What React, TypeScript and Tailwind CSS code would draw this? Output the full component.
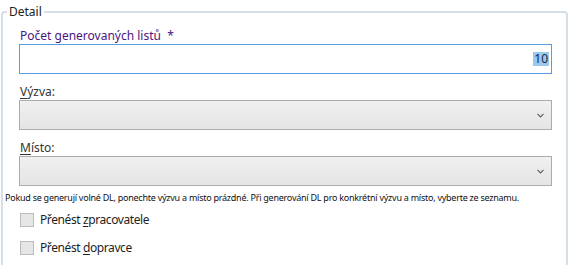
import React from "react";

const font = { fontFamily: '"Noto Sans", "Open Sans", sans-serif' };

function Chevron() {
  return (
    <svg width="7" height="5" viewBox="0 0 7 5" className="block">
      <polyline points="0.5,0.8 3.5,3.8 6.5,0.8" fill="none" stroke="#606060" strokeWidth="1.2" />
    </svg>
  );
}

function Combo() {
  return (
    <div className="h-[30px] border border-[#acacac] bg-gradient-to-b from-[#f0f0f0] to-[#e5e5e5] flex items-center justify-end pr-[7px]">
      <Chevron />
    </div>
  );
}

function Check({ pre, ul, post }: { pre: string; ul: string; post: string }) {
  return (
    <div className="flex items-center gap-[6px] h-[14px]">
      <div className="w-[14px] h-[14px] border border-[#bcbcbc] bg-[#e6e6e6]" />
      <span className="text-[12px] leading-[16px] tracking-[-0.4px] text-[#1e1e1e]">
        {pre}
        <span className="underline underline-offset-2">{ul}</span>
        {post}
      </span>
    </div>
  );
}

export default function App() {
  return (
    <div className="w-[571px] h-[265px] bg-white overflow-hidden pt-[4px]" style={font}>
      <fieldset className="ml-[1px] w-[567px] min-w-0 h-[290px] border-2 border-[#d5dfe5] rounded-[4px] pl-[16px] pr-[14px]">
        <legend className="ml-[-12px] px-[2px] text-[12px] leading-[16px] text-[#222]">Detail</legend>
        <div className="pt-[8px] flex flex-col min-w-0">
          <div className="text-[12px] leading-[16px] text-[#4b1680] pl-[1px]">Počet generovaných listů&nbsp; *</div>
          <div className="h-[30px] border border-[#569de5] bg-white flex items-center justify-end pr-[2px]">
            <span className="bg-[#99c9ef] text-[12px] leading-[14px] text-[#1a2a3a] px-[1px]">10</span>
          </div>
          <div className="mt-[10px] text-[12px] leading-[16px] text-[#333] pl-[1px]">
            <span className="underline underline-offset-2">V</span>ýzva:
          </div>
          <Combo />
          <div className="mt-[10px] text-[12px] leading-[16px] text-[#333] pl-[1px]">
            <span className="underline underline-offset-2">M</span>ísto:
          </div>
          <Combo />
          <div className="ml-[-14px] mt-[5px] text-[9px] leading-[14px] tracking-[-0.25px] text-[#111] whitespace-nowrap">
            Pokud se generují volné DL, ponechte výzvu a místo prázdné. Při generování DL pro konkrétní výzvu a místo, vyberte ze seznamu.
          </div>
          <div className="mt-[8px] pl-[1px] flex flex-col gap-[14px]">
            <Check pre="Přenést " ul="z" post="pracovatele" />
            <Check pre="Přenést " ul="d" post="opravce" />
          </div>
        </div>
      </fieldset>
    </div>
  );
}
